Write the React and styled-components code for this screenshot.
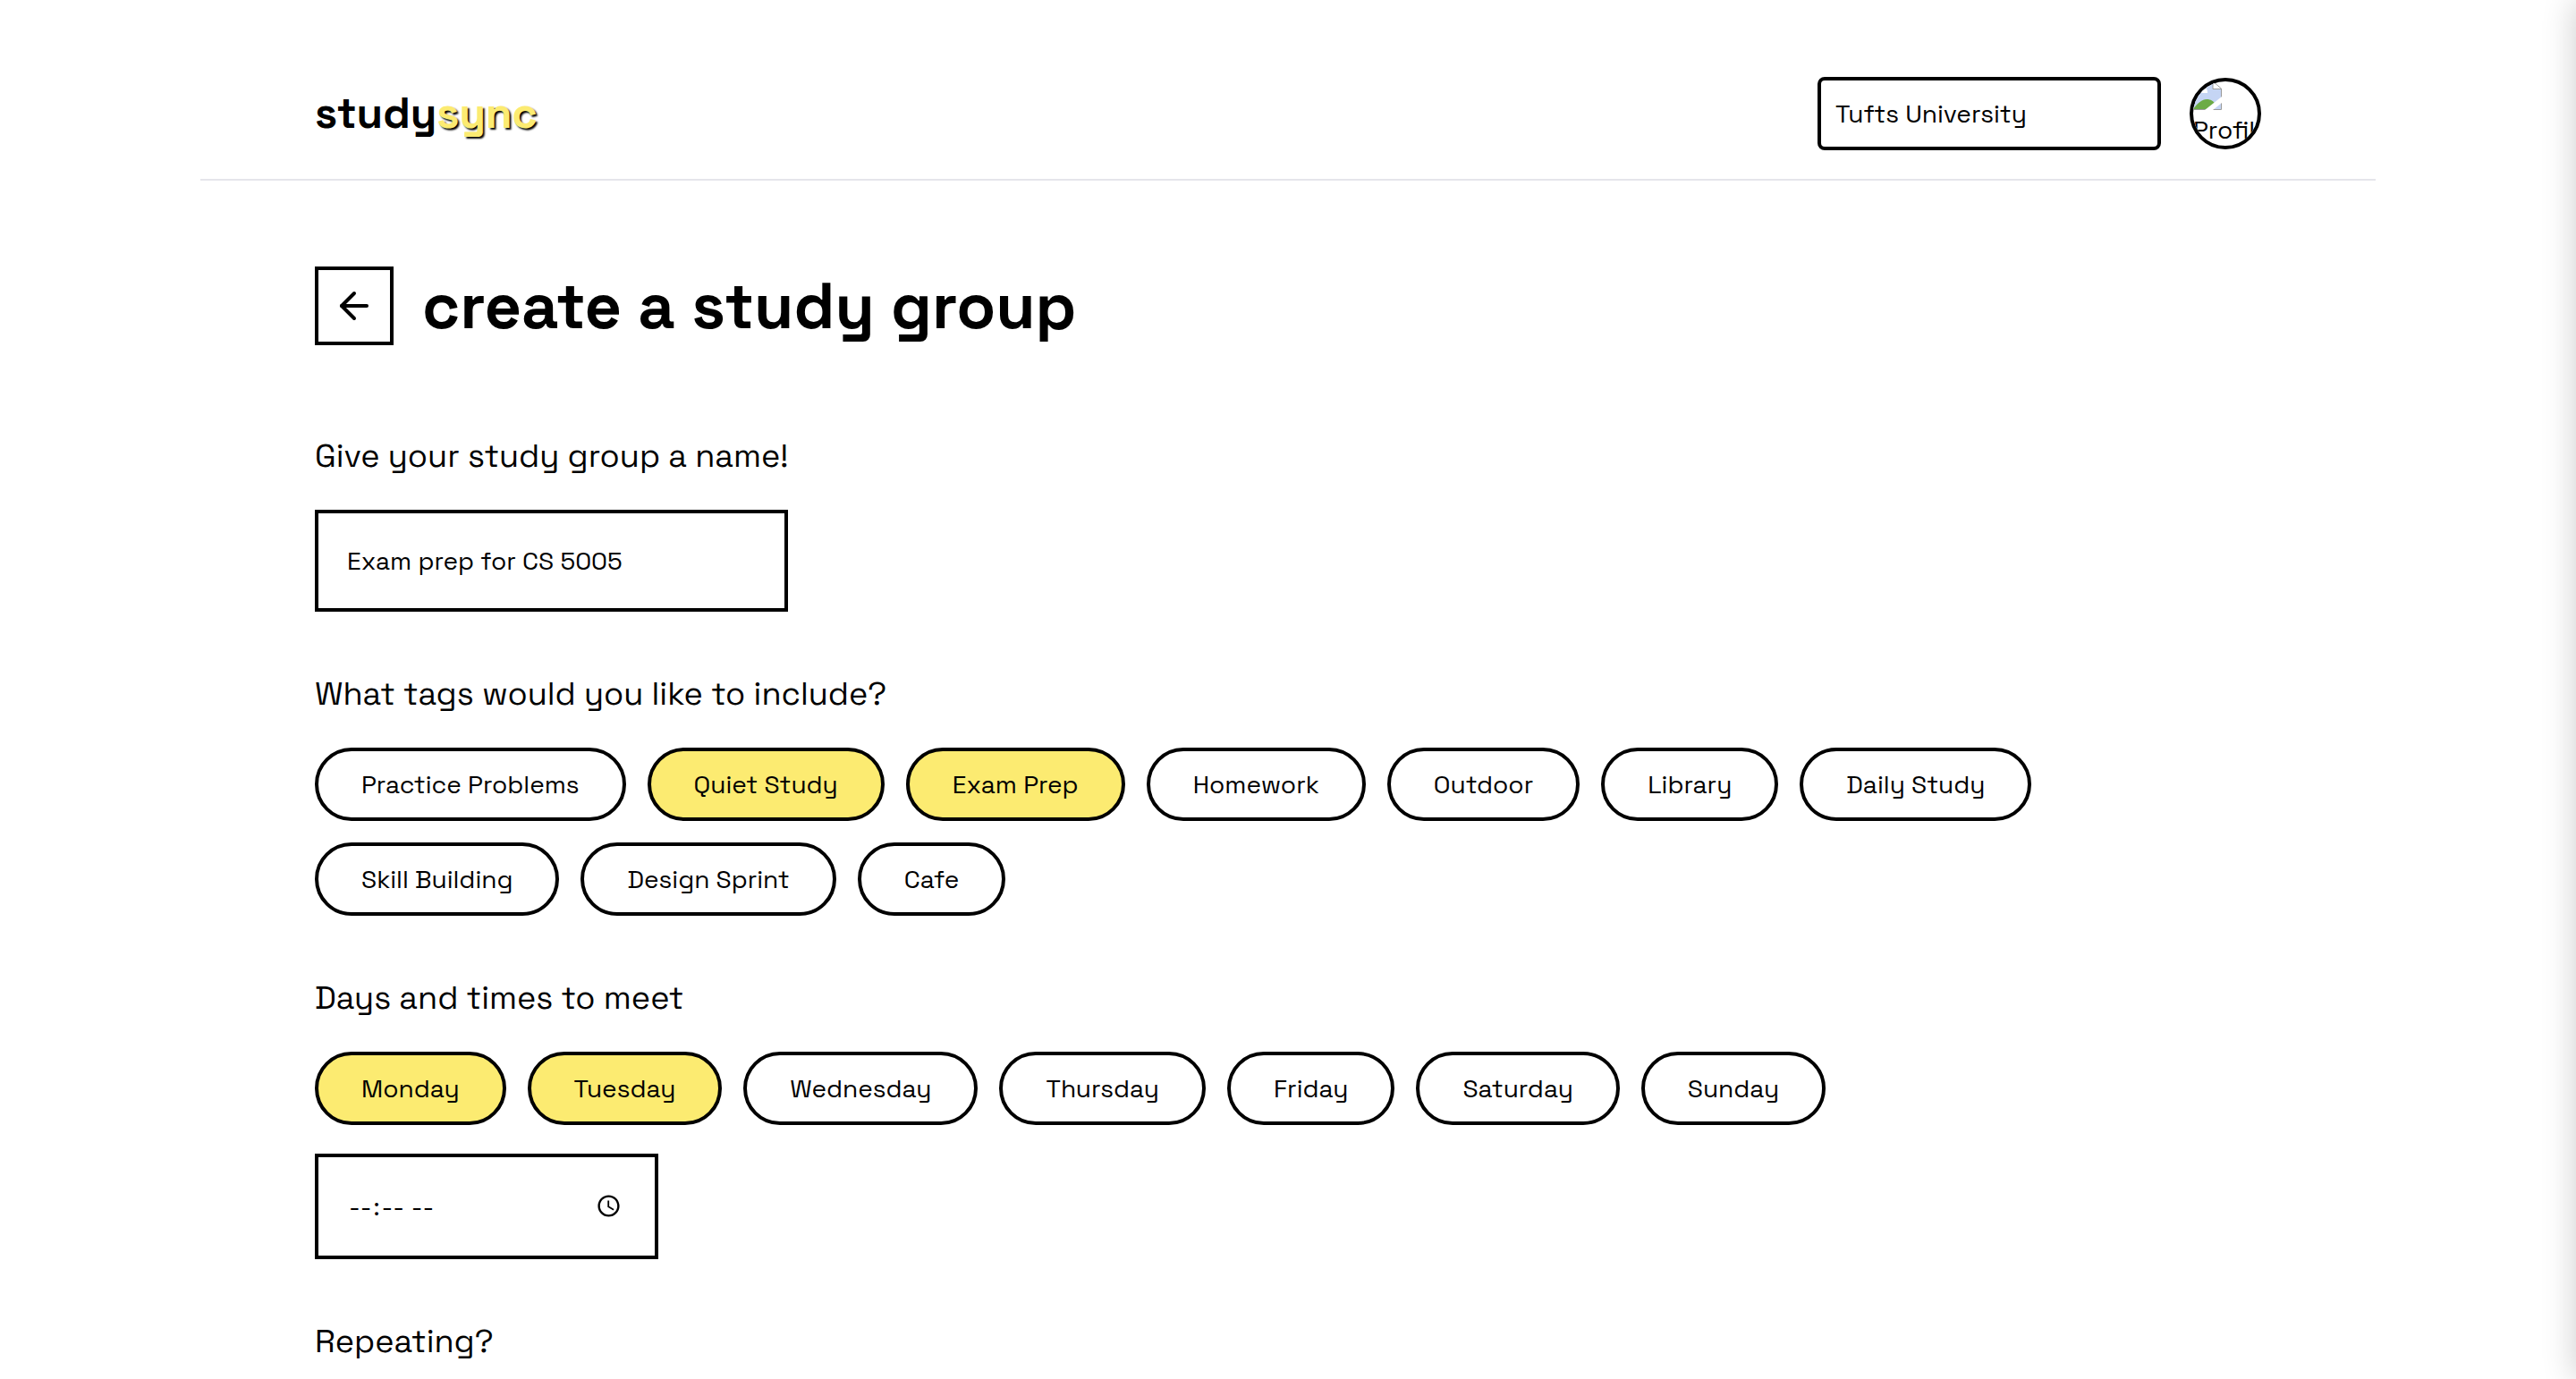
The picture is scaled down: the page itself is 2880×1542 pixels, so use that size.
import React, { useState } from "react";
import styled, { createGlobalStyle } from "styled-components";

const INK = "#000";
const YELLOW = "#fceb71";

const GlobalStyle = createGlobalStyle`
  *, *::before, *::after {
    box-sizing: border-box;
  }
  body {
    margin: 0;
    background: #fff;
    color: ${INK};
    font-family: "Space Grotesk", Inter, "Liberation Sans", sans-serif;
    font-size: 28px;
    line-height: 40px;
  }
  button, input, select {
    margin: 0;
    color: inherit;
    font: inherit;
  }
`;

const Page = styled.div`
  max-width: 2432px;
  margin: 0 auto;
`;

const Header = styled.header`
  display: flex;
  align-items: center;
  justify-content: space-between;
  padding: 86px 128px 32px;
  border-bottom: 2px solid #e5e5eb;
`;

const Logo = styled.a`
  color: ${INK};
  font-size: 48px;
  font-weight: 700;
  line-height: 64px;
  text-decoration: none;
`;

const LogoAccent = styled.span`
  color: ${YELLOW};
  text-shadow: 2px 2px 2px ${INK};
`;

const HeaderTools = styled.div`
  display: flex;
  align-items: center;
  gap: 32px;
`;

const SchoolSelect = styled.select`
  appearance: none;
  width: 384px;
  height: 82px;
  padding: 0 16px;
  border: 4px solid ${INK};
  border-radius: 8px;
  background: #fff;
`;

const Avatar = styled.a`
  display: flex;
  flex-direction: column;
  align-items: flex-start;
  width: 80px;
  height: 80px;
  overflow: hidden;
  border: 4px solid ${INK};
  border-radius: 50%;
  background: #fff;
  color: ${INK};
  line-height: 44px;
  text-decoration: none;

  svg {
    flex-shrink: 0;
  }
`;

const Main = styled.main`
  display: flex;
  flex-direction: column;
  gap: 96px;
  padding: 96px 128px 0;
`;

const TitleRow = styled.div`
  display: flex;
  align-items: center;
  gap: 32px;
`;

const BackButton = styled.button`
  display: grid;
  place-items: center;
  width: 88px;
  height: 88px;
  padding: 0;
  border: 4px solid ${INK};
  background: #fff;
`;

const Title = styled.h1`
  margin: 0;
  font-size: 72px;
  font-weight: 700;
  line-height: 80px;
`;

const Form = styled.form`
  display: flex;
  flex-direction: column;
  align-items: flex-start;
  gap: 64px;
`;

const Field = styled.div`
  display: flex;
  flex-direction: column;
  gap: 32px;
`;

const FieldLabel = styled.label`
  font-size: 36px;
  line-height: 56px;
`;

const TextInput = styled.input`
  width: 100%;
  height: 114px;
  padding: 0 32px;
  border: 4px solid ${INK};
  border-radius: 0;
  background: #fff;
`;

const TimeInput = styled(TextInput)`
  width: 384px;
  height: 118px;

  &::-webkit-datetime-edit-hour-field,
  &::-webkit-datetime-edit-minute-field,
  &::-webkit-datetime-edit-ampm-field {
    padding: 0 2px;
  }
  &::-webkit-calendar-picker-indicator {
    margin-right: 2px;
  }
`;

const PillRow = styled.div`
  display: flex;
  flex-wrap: wrap;
  gap: 24px;
`;

const Pill = styled.button`
  height: 82px;
  padding: 0 48px;
  border: 4px solid ${INK};
  border-radius: 41px;
  background: ${({ $selected }) => ($selected ? YELLOW : "#fff")};
`;

/* Closed side panel: parked past the right edge, only its shadow shows. */
const Drawer = styled.aside`
  position: fixed;
  top: 0;
  right: -640px;
  bottom: 0;
  width: 640px;
  background: #fff;
  box-shadow: 0 0 36px rgba(0, 0, 0, 0.2);
`;

const TAGS = [
  "Practice Problems",
  "Quiet Study",
  "Exam Prep",
  "Homework",
  "Outdoor",
  "Library",
  "Daily Study",
  "Skill Building",
  "Design Sprint",
  "Cafe",
];

const DAYS = [
  "Monday",
  "Tuesday",
  "Wednesday",
  "Thursday",
  "Friday",
  "Saturday",
  "Sunday",
];

function ArrowLeft() {
  return (
    <svg
      width="48"
      height="48"
      viewBox="0 0 24 24"
      fill="none"
      stroke="currentColor"
      strokeWidth="2"
      strokeLinecap="round"
      strokeLinejoin="round"
      aria-hidden="true"
    >
      <path d="m12 19-7-7 7-7" />
      <path d="M19 12H5" />
    </svg>
  );
}

function MissingPhoto() {
  return (
    <svg width="32" height="32" viewBox="0 0 32 32" aria-hidden="true">
      <path d="M0 1H22L31 9V31H0Z" fill="#c5d5f4" />
      <path d="M8 13a3 3 0 0 1 2-5 4 4 0 0 1 6 4v1Z" fill="#fff" />
      <path d="M0 31C5 24 10 20 15 20S22 22 26 26L20 31Z" fill="#6cab46" />
      <path d="M0 31.5H31.5V8L23 1H0" fill="none" stroke="#9a9a9a" />
      <path d="M22 1V8.500H31" fill="#fff" stroke="#9a9a9a" />
      <path d="M13 32L32 17V24L22 32Z" fill="#fff" />
    </svg>
  );
}

function PillGroup({ labelId, options, initial }) {
  const [selected, setSelected] = useState(initial);
  const toggle = (option) =>
    setSelected((current) =>
      current.includes(option)
        ? current.filter((item) => item !== option)
        : [...current, option]
    );

  return (
    <PillRow role="group" aria-labelledby={labelId}>
      {options.map((option) => (
        <Pill
          key={option}
          type="button"
          $selected={selected.includes(option)}
          aria-pressed={selected.includes(option)}
          onClick={() => toggle(option)}
        >
          {option}
        </Pill>
      ))}
    </PillRow>
  );
}

export default function App() {
  return (
    <>
      <GlobalStyle />
      <Page>
        <Header>
          <Logo href="#">
            study<LogoAccent>sync</LogoAccent>
          </Logo>
          <HeaderTools>
            <SchoolSelect aria-label="School" defaultValue="tufts">
              <option value="tufts">Tufts University</option>
            </SchoolSelect>
            <Avatar href="#profile">
              <MissingPhoto />
              Profile
            </Avatar>
          </HeaderTools>
        </Header>

        <Main>
          <TitleRow>
            <BackButton type="button" aria-label="Back">
              <ArrowLeft />
            </BackButton>
            <Title>create a study group</Title>
          </TitleRow>

          <Form>
            <Field>
              <FieldLabel htmlFor="group-name">
                Give your study group a name!
              </FieldLabel>
              <TextInput
                id="group-name"
                type="text"
                defaultValue="Exam prep for CS 5005"
              />
            </Field>

            <Field>
              <FieldLabel as="div" id="tags-label">
                What tags would you like to include?
              </FieldLabel>
              <PillGroup
                labelId="tags-label"
                options={TAGS}
                initial={["Quiet Study", "Exam Prep"]}
              />
            </Field>

            <Field>
              <FieldLabel htmlFor="meeting-time" id="days-label">
                Days and times to meet
              </FieldLabel>
              <PillGroup
                labelId="days-label"
                options={DAYS}
                initial={["Monday", "Tuesday"]}
              />
              <TimeInput id="meeting-time" type="time" />
            </Field>

            <Field>
              <FieldLabel as="div">Repeating?</FieldLabel>
            </Field>
          </Form>
        </Main>
      </Page>
      <Drawer aria-hidden="true" />
    </>
  );
}
